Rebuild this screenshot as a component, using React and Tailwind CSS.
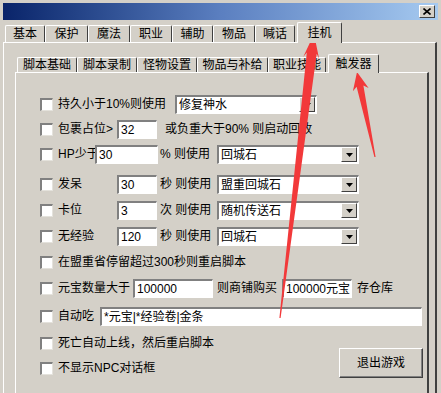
import React from "react"

const font = "font-['Liberation_Sans','Noto_Sans_CJK_SC',sans-serif]"

const mainTabs = [
  ["基本", "w-[40px]"],
  ["保护", "w-[43px]"],
  ["魔法", "w-[42px]"],
  ["职业", "w-[42px]"],
  ["辅助", "w-[41px]"],
  ["物品", "w-[42px]"],
  ["喊话", "w-[40px]"],
]

const subTabs = [
  ["脚本基础", "w-[60px]"],
  ["脚本录制", "w-[60px]"],
  ["怪物设置", "w-[60px]"],
  ["物品与补给", "w-[71px]"],
  ["职业技能", "w-[58px]"],
]

function arrowPoints(tx, ty, px, py, hl, hw, sw) {
  const dx = px - tx
  const dy = py - ty
  const len = Math.hypot(dx, dy)
  const ux = dx / len
  const uy = dy / len
  const nx = -uy
  const ny = ux
  const wx = px - ux * hl
  const wy = py - uy * hl
  const cx = px - ux * hl * 0.8
  const cy = py - uy * hl * 0.8
  const pts = [
    [tx + nx * 0.6, ty + ny * 0.6],
    [cx + nx * sw, cy + ny * sw],
    [wx + nx * hw, wy + ny * hw],
    [px, py],
    [wx - nx * hw, wy - ny * hw],
    [cx - nx * sw, cy - ny * sw],
    [tx - nx * 0.6, ty - ny * 0.6],
  ]
  return pts.map((p) => p.map((v) => v.toFixed(1)).join(",")).join(" ")
}

function Check() {
  return (
    <div className="w-[13px] h-[13px] mr-[5px] shrink-0 bg-white border-t-2 border-l-2 border-b border-r border-t-[#808080] border-l-[#808080] border-b-[#e4e2dc] border-r-[#e4e2dc]" />
  )
}

function Field({ value, w }) {
  return (
    <div
      className={`${w} h-[19px] shrink-0 flex items-center pl-[2px] bg-white border-t-2 border-l-2 border-b border-r border-t-[#808080] border-l-[#808080] border-b-white border-r-white overflow-hidden whitespace-nowrap`}
    >
      {value}
    </div>
  )
}

function Select({ value, w }) {
  return (
    <div
      className={`${w} h-[19px] shrink-0 flex items-center justify-between pl-[2px] pr-px bg-white border-t-2 border-l-2 border-b border-r border-t-[#808080] border-l-[#808080] border-b-white border-r-white`}
    >
      <span className="whitespace-nowrap">{value}</span>
      <div className="w-[16px] h-[15px] flex items-center justify-center bg-[#d4d0c8] border-t border-l border-b border-r border-t-white border-l-white border-b-[#404040] border-r-[#404040]">
        <svg width="7" height="4" viewBox="0 0 7 4">
          <path d="M0 0h7L3.5 4z" fill="#000" />
        </svg>
      </div>
    </div>
  )
}

function Row({ className = "", children }) {
  return <div className={`h-[20px] flex items-center whitespace-nowrap ${className}`}>{children}</div>
}

export default function App() {
  return (
    <div className={`relative w-[441px] h-[393px] overflow-hidden bg-[#d4d0c8] flex flex-col pt-[3px] px-[3px] text-[12px] leading-none text-black ${font}`}>
      {/* title bar */}
      <div className="h-[17px] shrink-0 flex items-center justify-end pr-[3px] bg-linear-to-r from-[#0a246a] via-[#5b7fc0] to-[#a6caf0]">
        <div className="w-[16px] h-[13px] flex items-center justify-center bg-[#d4d0c8] border-t border-l border-b border-r border-t-white border-l-white border-b-[#404040] border-r-[#404040]">
          <svg width="8" height="7" viewBox="0 0 8 7">
            <path d="M0.5 0.5L7.5 6.5M7.5 0.5L0.5 6.5" stroke="#000" strokeWidth="1.6" />
          </svg>
        </div>
      </div>

      {/* main tabs */}
      <div className="h-[20px] mt-[2px] ml-[2px] flex items-end shrink-0">
        {mainTabs.map(([label, w]) => (
          <div
            key={label}
            className={`${w} h-[17px] flex items-center justify-center rounded-t-[2px] border-t border-l border-r border-t-white border-l-white border-r-[#404040]`}
          >
            {label}
          </div>
        ))}
        <div className="w-[45px] h-[21px] ml-[2px] -mb-px relative z-10 bg-[#d4d0c8] flex items-center justify-center pb-px rounded-t-[2px] border-t border-l border-r border-t-white border-l-white border-r-[#404040]">
          挂机
        </div>
      </div>

      {/* outer panel */}
      <div className="w-[434px] flex-1 flex flex-col border-t border-l border-r-2 border-t-white border-l-white border-r-[#404040]">
        <div className="h-[19px] mt-[10px] ml-[13px] flex items-end shrink-0">
          {subTabs.map(([label, w]) => (
            <div
              key={label}
              className={`${w} h-[15px] flex items-center justify-center rounded-t-[2px] border-t border-l border-r border-t-white border-l-white border-r-[#404040]`}
            >
              {label}
            </div>
          ))}
          <div className="w-[51px] h-[19px] ml-[2px] -mb-px relative z-10 bg-[#d4d0c8] flex items-center justify-center rounded-t-[2px] border-t border-l border-r border-t-white border-l-white border-r-[#404040]">
            触发器
          </div>
        </div>

        {/* inner panel */}
        <div className="ml-[11px] w-[414px] flex-1 border-t border-l border-r-2 border-t-white border-l-white border-r-[#404040]">
          <div className="pl-[24px] pr-[4px] pt-[21px] flex flex-col">
            <Row>
              <Check />
              <span className="w-[117px]">持久小于10%则使用</span>
              <Select value="修复神水" w="w-[142px]" />
            </Row>

            <Row className="mt-[5px]">
              <Check />
              <span className="w-[59px]">包裹占位&gt;</span>
              <Field value="32" w="w-[40px]" />
              <span className="ml-[8px]">或负重大于90% 则启动回收</span>
            </Row>

            <Row className="mt-[5px]">
              <Check />
              <span className="w-[37px]">HP少于</span>
              <Field value="30" w="w-[63px]" />
              <span className="w-[59px] pl-[2px]">% 则使用</span>
              <Select value="回城石" w="w-[142px]" />
            </Row>

            <Row className="mt-[10px]">
              <Check />
              <span className="w-[59px]">发呆</span>
              <Field value="30" w="w-[40px]" />
              <span className="w-[60px] pl-[3px]">秒 则使用</span>
              <Select value="盟重回城石" w="w-[142px]" />
            </Row>

            <Row className="mt-[6px]">
              <Check />
              <span className="w-[59px]">卡位</span>
              <Field value="3" w="w-[40px]" />
              <span className="w-[60px] pl-[3px]">次 则使用</span>
              <Select value="随机传送石" w="w-[142px]" />
            </Row>

            <Row className="mt-[6px]">
              <Check />
              <span className="w-[59px]">无经验</span>
              <Field value="120" w="w-[40px]" />
              <span className="w-[60px] pl-[3px]">秒 则使用</span>
              <Select value="回城石" w="w-[142px]" />
            </Row>

            <Row className="mt-[6px]">
              <Check />
              <span>在盟重省停留超过300秒则重启脚本</span>
            </Row>

            <Row className="mt-[6px]">
              <Check />
              <span className="w-[75px]">元宝数量大于</span>
              <Field value="100000" w="w-[80px]" />
              <span className="w-[69px] pl-[4px]">则商铺购买</span>
              <Field value="100000元宝" w="w-[70px]" />
              <span className="ml-[5px]">存仓库</span>
            </Row>

            <Row className="mt-[8px]">
              <Check />
              <span className="w-[42px]">自动吃</span>
              <Field value="*元宝|*经验卷|金条" w="w-[322px]" />
            </Row>

            <div className="mt-[7px] flex items-end justify-between">
              <div className="flex flex-col">
                <Row>
                  <Check />
                  <span>死亡自动上线，然后重启脚本</span>
                </Row>
                <Row className="mt-[5px]">
                  <Check />
                  <span>不显示NPC对话框</span>
                </Row>
              </div>
              <button className="w-[84px] h-[30px] flex items-center justify-center bg-[#d4d0c8] border-t border-l border-b border-r border-t-white border-l-white border-b-[#404040] border-r-[#404040] shadow-[inset_-1px_-1px_0_#808080]">
                退出游戏
              </button>
            </div>
          </div>
        </div>
      </div>

      {/* red annotation arrows */}
      <svg className="absolute inset-0 pointer-events-none" width="441" height="393" viewBox="0 0 441 393">
        <polygon points={arrowPoints(280, 318, 314, 34, 24, 8, 5)} fill="#f2393a" />
        <polygon points={arrowPoints(375, 157, 357, 72, 18, 8, 3.5)} fill="#f2393a" />
      </svg>
    </div>
  )
}
